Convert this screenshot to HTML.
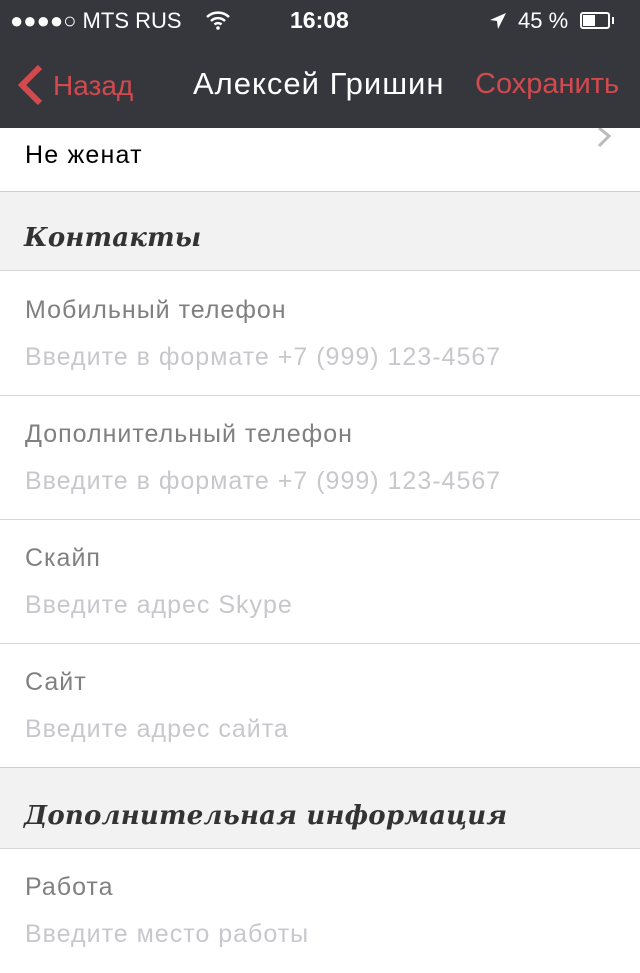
<!DOCTYPE html>
<html><head><meta charset="utf-8"><style>
*{margin:0;padding:0;box-sizing:border-box}
body{width:640px;height:960px;overflow:hidden;background:#fff;font-family:"Liberation Sans","DejaVu Sans",sans-serif;position:relative}
.nav{position:absolute;left:0;top:0;width:640px;height:128px;background:#36373c;color:#fff}
.abs{position:absolute;white-space:nowrap}
.sec{position:absolute;left:0;width:640px;height:80px;background:#f2f2f3;border-top:1px solid #cfcfcf;border-bottom:1px solid #d6d6d6}
.sec span{position:absolute;left:24px;top:31px;font-family:"DejaVu Serif",serif;font-style:italic;font-weight:bold;font-size:26px;color:#333;letter-spacing:0.2px}
.row{position:absolute;left:0;width:640px;height:124px;border-bottom:1px solid #d6d6d6}
.row .l{position:absolute;left:25px;top:24px;font-size:25px;color:#808080;letter-spacing:1px}
.row .p{position:absolute;left:25px;top:71px;font-size:25px;color:#c8c8cc;letter-spacing:1px}
</style></head><body>
<div class="nav">
 <div class="abs" style="left:10px;top:8px;font-size:22px">●●●●○ MTS RUS</div>
 <svg class="abs" style="left:205px;top:10px" width="26" height="20" viewBox="0 0 26 20"><path d="M2 7a16 16 0 0 1 22 0M6 11a10 10 0 0 1 14 0M9.5 14.5a5 5 0 0 1 7 0" stroke="#fff" stroke-width="2.5" fill="none"/><circle cx="13" cy="18" r="1.8" fill="#fff"/></svg>
 <div class="abs" style="left:290px;top:7px;font-size:23px;font-weight:bold">16:08</div>
 <svg class="abs" style="left:489px;top:12px" width="18" height="18" viewBox="0 0 18 18"><path d="M17 1L1 8l7 1 1 8z" fill="#fff"/></svg>
 <div class="abs" style="left:518px;top:8px;font-size:22px">45 %</div>
 <div class="abs" style="left:580px;top:12px;width:30px;height:17px;border:2px solid #fff;border-radius:3px"><div style="width:12px;height:11px;background:#fff;margin:1px"></div></div>
 <div class="abs" style="left:612px;top:17px;width:2px;height:7px;background:#fff"></div>
 <svg class="abs" style="left:14px;top:64px" width="30" height="42" viewBox="0 0 30 42"><path d="M26 3L8 21l18 18" stroke="#d2494e" stroke-width="6" fill="none"/></svg>
 <div class="abs" style="left:53px;top:70px;font-size:28px;color:#d2494e">Назад</div>
 <div class="abs" style="left:193px;top:66px;font-size:31px;color:#fff;letter-spacing:1px">Алексей Гришин</div>
 <div class="abs" style="left:475px;top:68px;font-size:29px;color:#d2494e">Сохранить</div>
</div>
<div class="abs" style="left:25px;top:141px;font-size:25px;color:#000;letter-spacing:1.2px">Не женат</div>
<svg class="abs" style="left:596px;top:128px" width="16" height="20" viewBox="0 0 16 20"><path d="M3 0l10 8-10 10" stroke="#bbb" stroke-width="3" fill="none"/></svg>
<div class="sec" style="top:191px"><span>Контакты</span></div>
<div class="row" style="top:272px"><div class="l">Мобильный телефон</div><div class="p">Введите в формате +7 (999) 123-4567</div></div>
<div class="row" style="top:396px"><div class="l">Дополнительный телефон</div><div class="p">Введите в формате +7 (999) 123-4567</div></div>
<div class="row" style="top:520px"><div class="l">Скайп</div><div class="p">Введите адрес Skype</div></div>
<div class="row" style="top:644px;border-bottom:none"><div class="l">Сайт</div><div class="p">Введите адрес сайта</div></div>
<div class="sec" style="top:767px;height:82px"><span style="top:33px">Дополнительная информация</span></div>
<div class="row" style="top:849px;border-bottom:none"><div class="l">Работа</div><div class="p">Введите место работы</div></div>
</body></html>
